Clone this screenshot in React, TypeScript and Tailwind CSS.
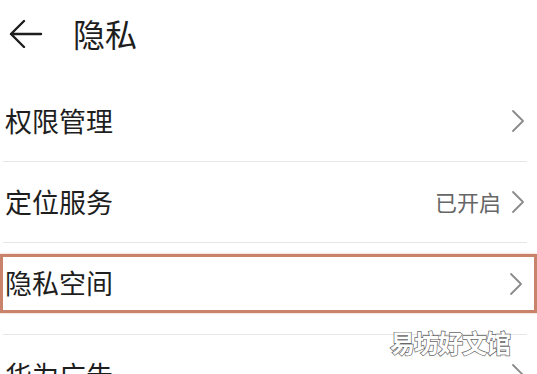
const rows = [
  { label: "权限管理" },
  { label: "定位服务", value: "已开启" },
  { label: "隐私空间", boxed: true },
  { label: "华为广告" },
]

function Chevron() {
  return (
    <svg width="14" height="24" viewBox="0 0 14 24" fill="none" className="shrink-0">
      <path d="M2 2 L12 12 L2 22" stroke="#8a8a8a" strokeWidth="1.8" strokeLinecap="round" strokeLinejoin="round" />
    </svg>
  )
}

export default function App() {
  return (
    <div className="relative w-[537px] h-[374px] overflow-hidden bg-white font-['Noto_Sans_CJK_SC','Noto_Sans',sans-serif] text-[#1e1e1e]">
      <div className="h-[81px] flex items-start pt-[16px] pl-[9px]">
        <svg width="34" height="32" viewBox="0 0 34 32" fill="none">
          <path d="M2 18 L32 18 M15 5 L2 18 L15 31" stroke="#1e1e1e" strokeWidth="2.4" strokeLinecap="round" strokeLinejoin="round" />
        </svg>
        <span className="ml-[30px] -mt-[3px] text-[32px] leading-[40px]">隐私</span>
      </div>
      {rows.map((row) => (
        <div key={row.label} className="mx-[3px] w-[524px] h-[81px] border-b border-[#e6e6e6]">
          {row.boxed ? (
            <div className="-mx-[3px] w-[537px] mt-[11px] h-[59px] border-[3px] border-[#c8836a] shadow-[0_0_2px_#e9b9a4] flex items-center pl-[2px] pr-[11px]">
              <span className="text-[27px] leading-none -mt-[2px]">{row.label}</span>
              <span className="ml-auto">
                <Chevron />
              </span>
            </div>
          ) : (
            <div className="h-full flex items-center pl-[2px] pr-[2px]">
              <span className="text-[27px] leading-none -mt-[2px]">{row.label}</span>
              {row.value && <span className="ml-auto mr-[10px] text-[22px] text-[#666] -mt-[2px]">{row.value}</span>}
              <span className={row.value ? "" : "ml-auto"}>
                <Chevron />
              </span>
            </div>
          )}
        </div>
      ))}
      <div className="absolute left-[390px] top-[324px] text-[25px] text-white font-bold tracking-[-1px] [-webkit-text-stroke:1.4px_#666] [paint-order:stroke_fill]">
        易坊好文馆
      </div>
    </div>
  )
}
